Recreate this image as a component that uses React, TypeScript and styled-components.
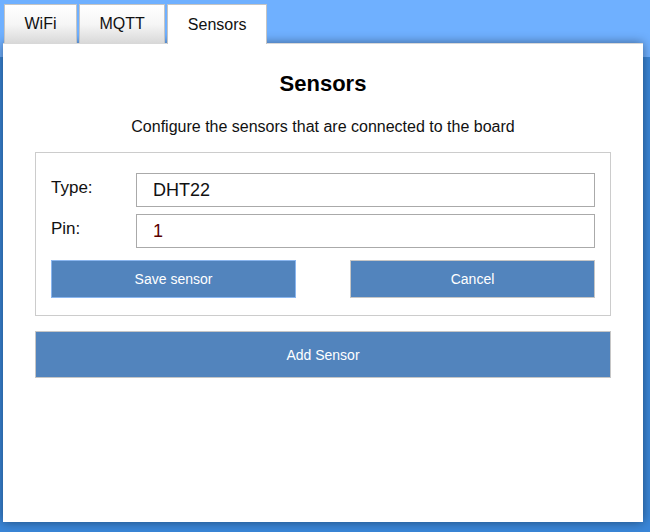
import styled, { createGlobalStyle } from 'styled-components';

const GlobalStyle = createGlobalStyle`
  html, body {
    margin: 0;
    padding: 0;
  }
  body {
    font-family: "Liberation Sans", Arial, sans-serif;
  }
`;

const Page = styled.div`
  width: 650px;
  height: 532px;
  box-sizing: border-box;
  padding: 4px 7px 0 3px;
  background: linear-gradient(#6fb0ff 0, #6fb0ff 57px, #3a86d8 57px);
  overflow: hidden;
`;

const TabBar = styled.div`
  display: flex;
  gap: 2px;
  padding-left: 1px;
  position: relative;
  z-index: 2;
`;

const Tab = styled.div<{ $active?: boolean }>`
  height: 39px;
  box-sizing: border-box;
  padding: 0 19.5px;
  display: flex;
  align-items: center;
  font-size: 16px;
  color: #111;
  border: 1px solid #c4c4c4;
  border-bottom: none;
  background: ${({ $active }) =>
    $active ? '#ffffff' : 'linear-gradient(#ffffff 0%, #f6f6f6 50%, #d9d9d9 100%)'};
  ${({ $active }) => ($active ? 'height: 40px; margin-bottom: -1px;' : '')}
`;

const Panel = styled.div`
  height: 479px;
  box-sizing: border-box;
  background: #ffffff;
  border-top: 1px solid #d8d8d8;
  box-shadow: 0 0 10px rgba(0, 0, 0, 0.45);
  padding: 0 32px;
  position: relative;
  z-index: 1;
`;

const Title = styled.h2`
  margin: 0;
  padding-top: 26px;
  font-size: 22px;
  font-weight: bold;
  text-align: center;
  color: #000;
  line-height: 28px;
`;

const Subtitle = styled.p`
  margin: 19px 0 15px;
  font-size: 16px;
  text-align: center;
  color: #111;
  line-height: 20px;
`;

const SensorBox = styled.div`
  border: 1px solid #cccccc;
  padding: 20px 15px 17px;
  display: flex;
  flex-direction: column;
  gap: 7px;
`;

const FieldRow = styled.div`
  display: grid;
  grid-template-columns: 85px 1fr;
  align-items: start;
`;

const Label = styled.label`
  font-size: 17px;
  color: #111;
  line-height: 20px;
  padding-top: 5px;
`;

const Input = styled.input<{ $tone?: string }>`
  height: 34px;
  box-sizing: border-box;
  border: 1px solid #aaaaaa;
  padding: 0 16px;
  font-family: "Liberation Sans", Arial, sans-serif;
  font-size: 18px;
  color: ${({ $tone }) => $tone || '#111'};
  outline: none;
`;

const ButtonRow = styled.div`
  display: flex;
  justify-content: space-between;
  margin-top: 5px;
`;

const Button = styled.button<{ $focused?: boolean; $wide?: boolean }>`
  width: ${({ $wide }) => ($wide ? '100%' : '245px')};
  height: ${({ $wide }) => ($wide ? '47px' : '38px')};
  box-sizing: border-box;
  background: #5284bd;
  border: 1px solid ${({ $focused }) => ($focused ? '#8ab6ef' : '#c6c6c6')};
  color: #ffffff;
  font-family: "Liberation Sans", Arial, sans-serif;
  font-size: 14px;
  cursor: pointer;
  padding: 0;
`;

const AddRow = styled.div`
  margin-top: 15px;
`;

export default function App() {
  return (
    <>
      <GlobalStyle />
      <Page>
        <TabBar>
          <Tab>WiFi</Tab>
          <Tab>MQTT</Tab>
          <Tab $active>Sensors</Tab>
        </TabBar>
        <Panel>
          <Title>Sensors</Title>
          <Subtitle>Configure the sensors that are connected to the board</Subtitle>
          <SensorBox>
            <FieldRow>
              <Label>Type:</Label>
              <Input defaultValue="DHT22" />
            </FieldRow>
            <FieldRow>
              <Label>Pin:</Label>
              <Input defaultValue="1" $tone="#5a0000" />
            </FieldRow>
            <ButtonRow>
              <Button $focused>Save sensor</Button>
              <Button>Cancel</Button>
            </ButtonRow>
          </SensorBox>
          <AddRow>
            <Button $wide>Add Sensor</Button>
          </AddRow>
        </Panel>
      </Page>
    </>
  );
}
